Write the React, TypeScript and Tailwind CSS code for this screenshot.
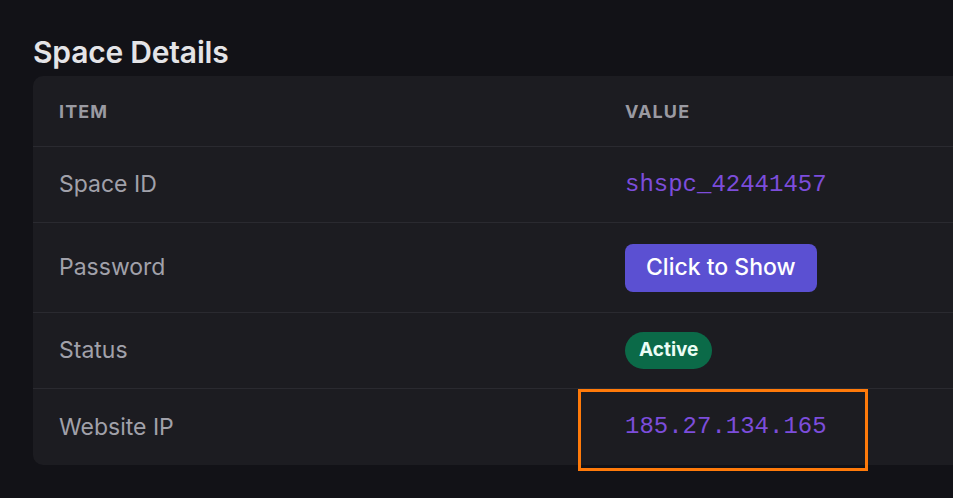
import React from 'react'

const ROWS = [
  { label: 'Space ID', kind: 'mono', value: 'shspc_42441457', h: 'h-[76px]' },
  { label: 'Password', kind: 'button', value: 'Click to Show', h: 'h-[90px]' },
  { label: 'Status', kind: 'badge', value: 'Active', h: 'h-[76px]' },
  { label: 'Website IP', kind: 'mono', value: '185.27.134.165', h: 'h-[76px]' },
]

export default function App() {
  return (
    <div className="w-[953px] h-[498px] overflow-hidden bg-[#121217] font-['Inter',sans-serif]">
      <div className="pl-[33px] pt-[35px]">
        <h2 className="text-[30px] leading-[35px] font-semibold text-[#e4e4e7] tracking-[-0.2px]">Space Details</h2>

        <div className="mt-[6px] w-[1000px] rounded-[10px] bg-[#1c1c21]">
          {/* Header */}
          <div className="flex h-[71px] items-center border-b border-[#2a2a30] text-[18px] font-bold uppercase tracking-[0.06em] text-[#9a9aa2]">
            <div className="w-[566px] pl-[26px]">Item</div>
            <div className="pl-[26px]">Value</div>
          </div>

          {ROWS.map((row, i) => (
            <div
              key={row.label}
              className={`relative flex items-center ${row.h} ${i < ROWS.length - 1 ? 'border-b border-[#2a2a30]' : ''}`}
            >
              <div className="w-[566px] pl-[26px] text-[23px] text-[#a1a1aa]">{row.label}</div>
              <div className="pl-[26px]">
                {row.kind === 'mono' && (
                  <span className="font-['Liberation_Mono',monospace] text-[24px] text-[#7c4ddb]">{row.value}</span>
                )}
                {row.kind === 'button' && (
                  <button className="h-[48px] rounded-[8px] bg-[#5b50d2] px-[21px] text-[23px] font-medium text-white">
                    {row.value}
                  </button>
                )}
                {row.kind === 'badge' && (
                  <span className="inline-flex h-[37px] items-center rounded-full bg-[#0b6a48] px-[14px] text-[19px] font-bold text-[#ecfdf5]">
                    {row.value}
                  </span>
                )}
              </div>
              {row.label === 'Website IP' && (
                <div className="absolute left-[545px] top-0 h-[82px] w-[290px] border-[3px] border-[#ff7a0a]" />
              )}
            </div>
          ))}
        </div>
      </div>
    </div>
  )
}
